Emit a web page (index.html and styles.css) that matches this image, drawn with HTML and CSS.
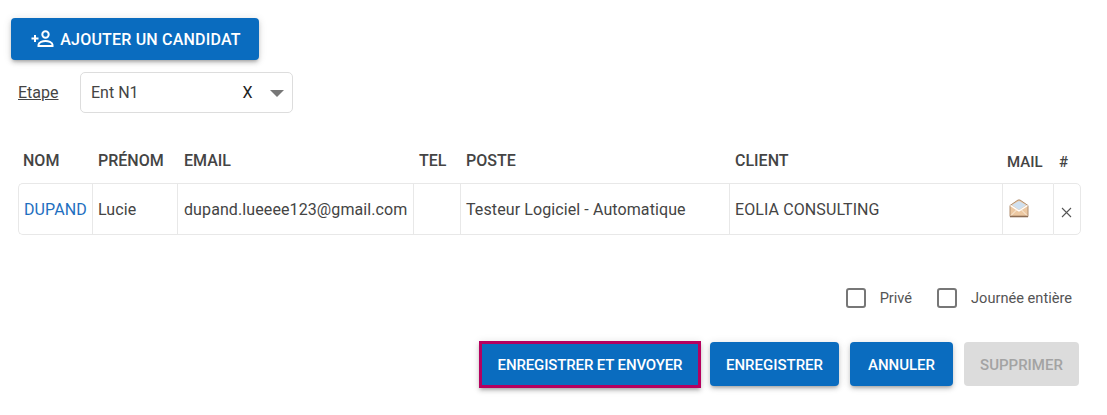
FILE: index.html
```html
<!DOCTYPE html>
<html lang="fr">
<head>
<meta charset="utf-8">
<title>Candidats</title>
<link rel="stylesheet" href="styles.css">
</head>
<body>
<div class="page">
  <button class="btn btn-add" type="button">
    <svg class="add-icon" width="24" height="24" viewBox="0 0 24 24" fill="none" stroke="#fff" stroke-width="2">
      <path d="M0.5 11.5h7M4 8v7"/>
      <circle cx="14.5" cy="7.5" r="3.2"/>
      <path d="M7.5 19v-1.2c0-2.6 4.4-3.9 7-3.9s7 1.3 7 3.9V19z"/>
    </svg>
    <span>AJOUTER UN CANDIDAT</span>
  </button>
  <div class="stage">
    <span class="stage-label">Etape</span>
    <div class="select">
      <span class="select-value">Ent N1</span>
      <span class="select-clear">X</span>
      <span class="select-arrow"></span>
    </div>
  </div>
  <table class="grid">
    <colgroup>
      <col class="c1"><col class="c2"><col class="c3"><col class="c4"><col class="c5"><col class="c6"><col class="c7"><col class="c8">
    </colgroup>
    <thead>
      <tr>
        <th class="th-first">NOM</th><th>PRÉNOM</th><th class="th-email">EMAIL</th><th>TEL</th><th>POSTE</th><th>CLIENT</th><th class="low">MAIL</th><th class="low">#</th>
      </tr>
    </thead>
    <tbody>
      <tr>
        <td class="first name">DUPAND</td>
        <td>Lucie</td>
        <td class="email">dupand.lueeee123@gmail.com</td>
        <td></td>
        <td>Testeur Logiciel - Automatique</td>
        <td>EOLIA CONSULTING</td>
        <td>
          <svg class="mail" width="20" height="19" viewBox="0 0 20 19">
            <path d="M1 6.5 9 1h2l8 5.5v11H1z" fill="#ecc8a2" stroke="#b08e70" stroke-width="1"/>
            <path d="M3 6 10 2l7 4-7 5z" fill="#cfe0f0"/>
            <path d="M1.5 6.5 10 12l8.5-5.5" fill="none" stroke="#fff" stroke-width="1.4"/>
            <path d="M1.5 17 8 10.5M18.5 17 12 10.5" stroke="#fbeedd" stroke-width="1"/>
            <path d="M1 17.5h18" stroke="#8c6d54" stroke-width="1.6"/>
          </svg>
        </td>
        <td class="last">
          <svg class="close" width="11" height="11" viewBox="0 0 11 11" stroke="#555" stroke-width="1.1"><path d="M1 1l9 9M10 1 1 10"/></svg>
        </td>
      </tr>
    </tbody>
  </table>
  <div class="checks">
    <label class="check"><span class="box"></span>Privé</label>
    <label class="check"><span class="box"></span>Journée entière</label>
  </div>
  <div class="actions">
    <button class="btn btn-act btn-focus" type="button">ENREGISTRER ET ENVOYER</button>
    <button class="btn btn-act btn-save" type="button">ENREGISTRER</button>
    <button class="btn btn-act btn-cancel" type="button">ANNULER</button>
    <button class="btn btn-act btn-disabled" type="button">SUPPRIMER</button>
  </div>
</div>
</body>
</html>
```

FILE: styles.css
```css
* { box-sizing: border-box; }
html, body { margin: 0; background: #fff; }
body { font-family: Roboto, "Liberation Sans", sans-serif; color: #444; overflow: hidden; }
.page { width: 1107px; height: 415px; padding: 18px 26px 0 11px; }
.btn {
  border: 0; border-radius: 4px; background: #0a6cbf; color: #fff;
  font: 500 15px Roboto, sans-serif; padding: 0; cursor: pointer;
  box-shadow: 0 3px 3px -2px rgba(0,0,0,.2), 0 3px 4px rgba(0,0,0,.14), 0 1px 8px rgba(0,0,0,.12);
  display: flex; align-items: center; justify-content: center;
}
.btn-add { width: 248px; height: 42px; padding-left: 3px; font-size: 16px; letter-spacing: .2px; gap: 5px; }
.add-icon { display: block; margin-left: -1px; }
.stage { display: flex; align-items: center; margin: 12px 0 0 7px; gap: 21px; }
.stage-label { font-size: 16px; text-decoration: underline; color: #444; }
.select {
  width: 213px; height: 41px; border: 1px solid #ddd; border-radius: 5px;
  display: flex; align-items: center; padding: 0 8px 0 10.5px; font-size: 16px;
}
.select-value { flex: 1; }
.select-clear { color: #222; margin-right: 17px; }
.select-arrow { width: 0; height: 0; border: 7px solid transparent; border-top: 7px solid #777; border-bottom: 0; margin-top: 2px; }
.grid { margin: 27px 0 0 7px; width: 1063px; border-collapse: separate; border-spacing: 0; table-layout: fixed; }
.c1 { width: 74px; } .c2 { width: 85px; } .c3 { width: 236px; } .c4 { width: 47px; }
.c5 { width: 269px; } .c6 { width: 273px; } .c7 { width: 51px; } .c8 { width: 28px; }
th { font-size: 16px; font-weight: 500; text-align: left; padding: 0 5px 13px 6px; height: 43px; vertical-align: bottom; color: #444; white-space: nowrap; }
th.th-first { padding-left: 5px; }
th.th-email { padding-left: 7px; }
th.low { padding-bottom: 12px; font-size: 15px; padding-left: 5px; }
th.low:last-child { padding-left: 6px; }
td {
  height: 52px; padding: 0 5px; font-size: 16px; letter-spacing: .1px; color: #444; white-space: nowrap;
  border-top: 1px solid #e8e8e8; border-bottom: 1px solid #e8e8e8; border-left: 1px solid #e8e8e8;
}
td.first { border-top-left-radius: 5px; border-bottom-left-radius: 5px; }
td.email { padding-left: 6px; }
td.last { border-right: 1px solid #e8e8e8; border-top-right-radius: 5px; border-bottom-right-radius: 5px; padding: 6px 0 0 7px; }
.name { color: #1e6fc0; }
.mail { display: block; margin-left: 1px; margin-top: -2px; }
.close { display: block; }
.checks { display: flex; justify-content: flex-end; gap: 25px; margin-top: 53px; padding-right: 9px; }
.check { display: flex; align-items: center; gap: 14px; font-size: 14.6px; color: #555; }
.box { width: 20px; height: 20px; border: 2px solid #777; border-radius: 3px; }
.actions { display: flex; justify-content: flex-end; align-items: flex-start; gap: 11px; margin-top: 34px; padding-right: 2px; }
.btn-act { height: 44px; padding-top: 1px; }
.btn-focus { width: 222px; height: 47px; border: 3px solid #b5005f; border-radius: 0; margin: -1px -2px 0 0; letter-spacing: -.13px; }
.btn-save { width: 129px; }
.btn-cancel { width: 103px; }
.btn-disabled { width: 115px; background: #dcdcdc; color: #a3a3a3; box-shadow: none; }
```
